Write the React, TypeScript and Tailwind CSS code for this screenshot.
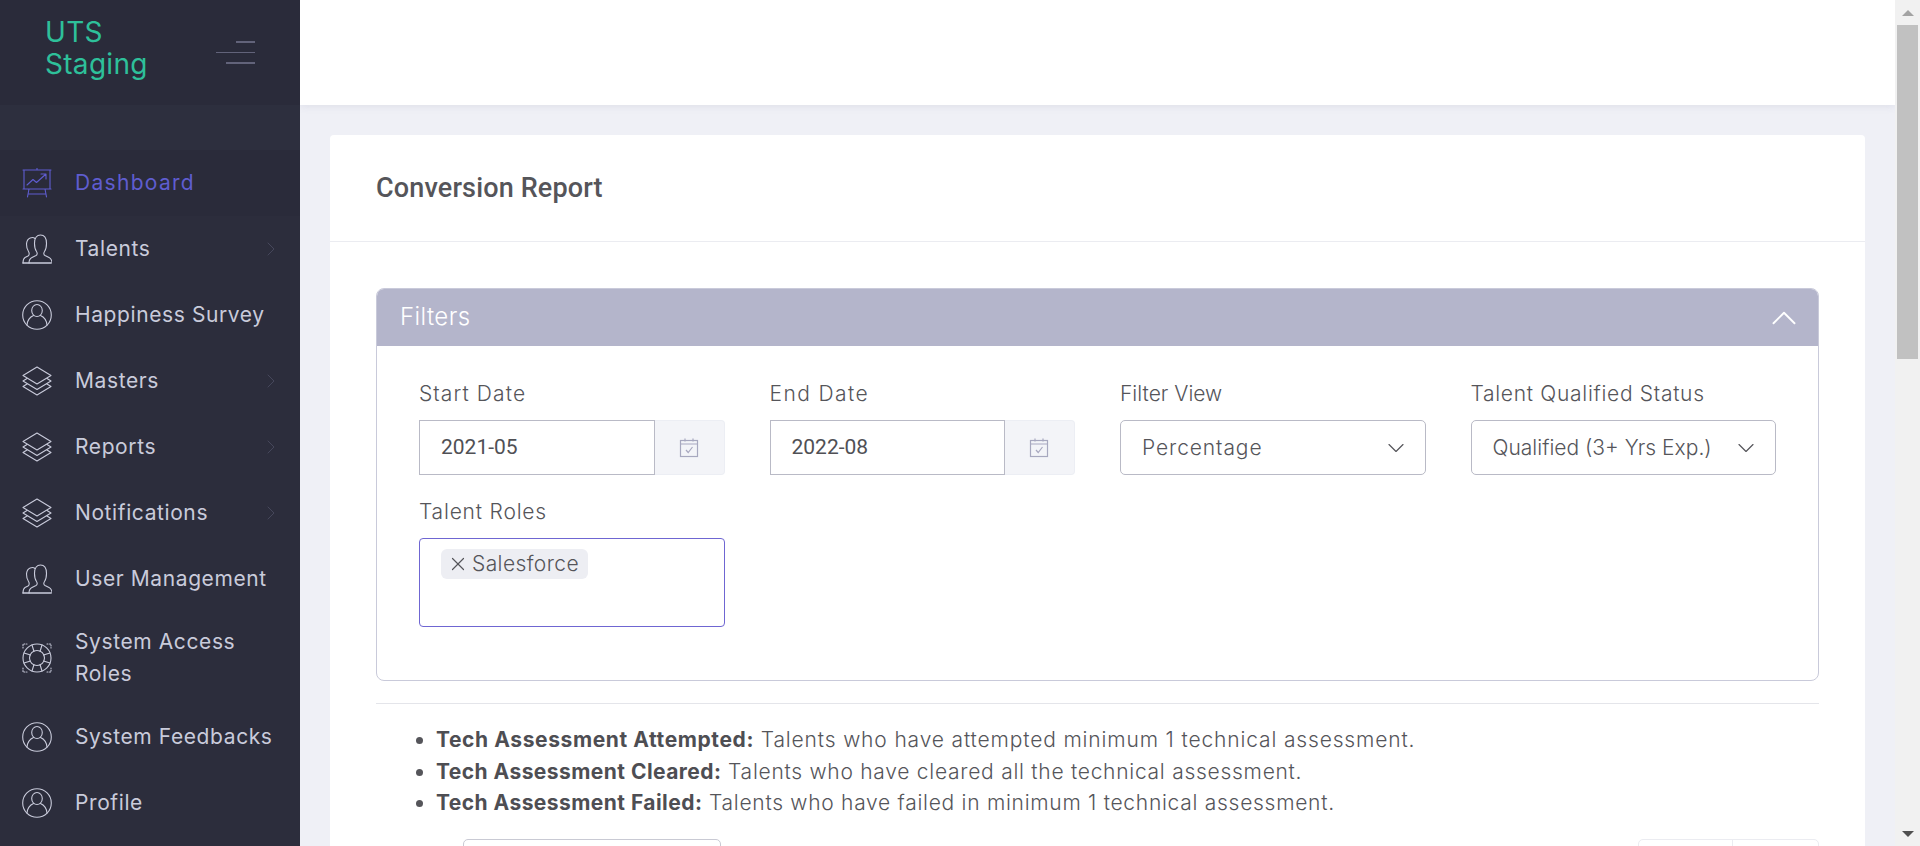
import { ChevronDown, ChevronRight, ChevronUp, X } from 'lucide-react';
import type { ReactNode } from 'react';

const Svg = ({ children }: { children: ReactNode }) => (
  <svg viewBox="0 0 30 30" fill="none" stroke="currentColor" strokeWidth="1.1" strokeLinejoin="round" strokeLinecap="round" className="h-[30px] w-[30px] shrink-0">
    {children}
  </svg>
);

const BoardIcon = () => (
  <Svg>
    <path d="M1 2h28M2 2v19h26V2M1 21h28M15 0v2M7 21l-1.500 8M23 21l1.500 8M6.500 26h17" />
    <path d="M5 17l6-5.500 3.500 3L24 6M19 6h5v5" />
  </Svg>
);

const UsersIcon = () => (
  <Svg>
    <path d="M7 29c0-3 1-4.500 3-5.500l4-2c1.500-.8 1.500-2.500.5-4-1.500-2-2-5-2-8C12.500 4 15 1 18.500 1s6 3 6 8.500c0 3-.5 6-2 8-1 1.500-1 3.200.5 4l4 2c2 1 3 2.500 3 5.500" />
    <path d="M13 4.500C11 2.800 5 3 4.500 10c0 3 .5 5.500 2 7.500 1 1.500 1 3.500-.5 4.500l-3 1.500C1.500 24.500 1 26.500 1 29" />
    <path d="M1 29h28" strokeWidth="1.500" />
  </Svg>
);

const UserIcon = () => (
  <Svg>
    <circle cx="15" cy="15" r="14.300" />
    <ellipse cx="15" cy="10.500" rx="5.300" ry="6" />
    <path d="M5 25c.5-5 3-8 6.500-9.500M25 25c-.5-5-3-8-6.500-9.500" />
  </Svg>
);

const LayersIcon = () => (
  <Svg>
    <path d="M15 1L29 9.500 15 18 1 9.500z" />
    <path d="M5 12.500L1 15l14 8.500L29 15l-4-2.500" />
    <path d="M5 18L1 20.500 15 29l14-8.500-4-2.500" />
  </Svg>
);

const RingIcon = () => (
  <Svg>
    <circle cx="15" cy="15" r="14" />
    <circle cx="15" cy="15" r="7.500" />
    <path d="M10 2l2 6.500M20 2l-2 6.500M10 28l2-6.500M20 28l-2-6.500M2 10l6.500 2M2 20l6.500-2M28 10l-6.500 2M28 20l-6.500-2" />
    <path d="M1 5V1h4M25 1h4v4M1 25v4h4M25 29h4v-4" strokeDasharray="1 1.500" />
  </Svg>
);

const CalendarIcon = () => (
  <svg viewBox="0 0 20 20" fill="none" stroke="#a7a8bf" strokeWidth="1.200" className="h-5 w-5">
    <rect x="1.500" y="2.500" width="17" height="16" />
    <path d="M1.500 6h17M6 0.500v3M14 0.500v3" />
    <path d="M7 12l2.200 2.500L13.500 9" />
  </svg>
);

const navItems = [
  { label: 'Talents', icon: <UsersIcon />, arrow: true },
  { label: 'Happiness Survey', icon: <UserIcon /> },
  { label: 'Masters', icon: <LayersIcon />, arrow: true },
  { label: 'Reports', icon: <LayersIcon />, arrow: true },
  { label: 'Notifications', icon: <LayersIcon />, arrow: true },
  { label: 'User Management', icon: <UsersIcon /> },
];

const NavRow = ({ label, icon, arrow, tall }: { label: ReactNode; icon: ReactNode; arrow?: boolean; tall?: boolean }) => (
  <div className={`flex items-center pl-[22px] pr-[17px] text-[#c9cbdb] ${tall ? 'h-[92px]' : 'h-[66px]'}`}>
    {icon}
    <span className="ml-[23px] flex-1 text-[21px] leading-[32px] tracking-[0.6px]">{label}</span>
    {arrow && <ChevronRight size={24} strokeWidth={0.8} className="text-[#4c4e63]" />}
  </div>
);

function Sidebar() {
  return (
    <aside className="h-[846px] w-[300px] shrink-0 overflow-hidden bg-[#2c2d3c] font-['Inter',sans-serif]">
      <div className="flex h-[105px] items-center justify-between bg-[#2a2b3a] pl-[45px] pr-[45px]">
        <div className="mb-[10px] w-[120px] text-[28px] leading-[32px] tracking-[0.3px] text-[#2ec09a]">UTS Staging</div>
        <div className="flex w-[40px] flex-col items-end gap-[9px]">
          <span className="h-[2px] w-[19px] bg-[#62637a]" />
          <span className="h-px w-[39px] bg-[#62637a]" />
          <span className="h-[2px] w-[29px] bg-[#62637a]" />
        </div>
      </div>
      <div className="h-[45px] bg-[#2d2f3e]" />
      <div className="flex h-[66px] items-center bg-[#2a2b3a] pl-[22px] text-[#5f5dd0]">
        <BoardIcon />
        <span className="ml-[23px] text-[21px] leading-[32px] tracking-[1.3px]">Dashboard</span>
      </div>
      {navItems.map((item) => (
        <NavRow key={item.label} {...item} />
      ))}
      <NavRow tall icon={<RingIcon />} label={<>System Access<br />Roles</>} />
      <NavRow icon={<UserIcon />} label="System Feedbacks" />
      <NavRow icon={<UserIcon />} label="Profile" />
    </aside>
  );
}

const FieldLabel = ({ children, className }: { children: ReactNode; className: string }) => (
  <div className={`text-[21px] font-light leading-[30px] text-[#55555a] ${className}`}>{children}</div>
);

const DateField = ({ label, value, inputWidth, tracking }: { label: string; value: string; inputWidth: string; tracking: string }) => (
  <div>
    <FieldLabel className={`mb-[11px] ${tracking}`}>{label}</FieldLabel>
    <div className="flex h-[55px]">
      <div className={`flex items-center border border-[#b9bac6] bg-white pl-[21px] font-['Roboto',sans-serif] text-[21px] text-[#505055] ${inputWidth}`}>
        {value}
      </div>
      <div className="flex flex-1 items-center justify-center rounded-r-[4px] border border-l-0 border-[#eceef4] bg-[#f3f4f8]">
        <CalendarIcon />
      </div>
    </div>
  </div>
);

const SelectField = ({ label, value, tracking, valueTracking }: { label: string; value: string; tracking: string; valueTracking: string }) => (
  <div>
    <FieldLabel className={`mb-[11px] ${tracking}`}>{label}</FieldLabel>
    <div className="flex h-[55px] items-center justify-between rounded-[5px] border border-[#b9bac6] bg-white pl-[21px] pr-[16px] text-[21px] font-light text-[#55555a]">
      <span className={`whitespace-nowrap ${valueTracking}`}>{value}</span>
      <ChevronDown size={28} strokeWidth={1} className="-mx-[1px] shrink-0 text-[#55555a]" />
    </div>
  </div>
);

function Filters() {
  return (
    <section className="h-[393px] rounded-[8px] border border-[#c9cada] bg-white">
      <div className="flex h-[57px] items-center justify-between rounded-t-[7px] bg-[#b4b5cb] pl-[23px] pr-[13px] text-white">
        <span className="pb-[2px] text-[24px] font-light tracking-[0.4px]">Filters</span>
        <ChevronUp size={42} strokeWidth={1.1} />
      </div>
      <div className="px-[42px] pt-[33px]">
        <div className="grid grid-cols-4 gap-x-[45px]">
          <DateField label="Start Date" value="2021-05" inputWidth="w-[236px]" tracking="tracking-[1.1px]" />
          <DateField label="End Date" value="2022-08" inputWidth="w-[235px]" tracking="tracking-[1.4px]" />
          <SelectField label="Filter View" value="Percentage" tracking="tracking-normal" valueTracking="tracking-[0.9px]" />
          <SelectField label="Talent Qualified Status" value="Qualified (3+ Yrs Exp.)" tracking="tracking-[0.7px]" valueTracking="tracking-normal" />
        </div>
        <div className="mt-[22px] w-[306px]">
          <FieldLabel className="mb-[11px] tracking-[0.8px]">Talent Roles</FieldLabel>
          <div className="h-[89px] rounded-[4px] border border-[#6f66d2] pl-[21px] pt-[10px]">
            <span className="inline-flex h-[30px] items-center gap-[3px] rounded-[6px] bg-[#edeef3] pl-[6px] pr-[9px] text-[21px] font-light tracking-[0.4px] text-[#55555a]">
              <X size={22} strokeWidth={1.3} />
              Salesforce
            </span>
          </div>
        </div>
      </div>
    </section>
  );
}

const notes = [
  { title: 'Tech Assessment Attempted:', text: 'Talents who have attempted minimum 1 technical assessment.', titleTrack: 'tracking-[0.6px]', textTrack: 'tracking-[0.85px]' },
  { title: 'Tech Assessment Cleared:', text: 'Talents who have cleared all the technical assessment.', titleTrack: 'tracking-[0.45px]', textTrack: 'tracking-[0.73px]' },
  { title: 'Tech Assessment Failed:', text: 'Talents who have failed in minimum 1 technical assessment.', titleTrack: 'tracking-[0.45px]', textTrack: 'tracking-[0.72px]' },
];

function Scrollbar() {
  return (
    <div className="flex h-[846px] w-[25px] shrink-0 flex-col items-center bg-[#f1f1f1]">
      <div className="flex h-[25px] items-center justify-center">
        <div className="h-0 w-0 border-x-[6px] border-b-[6px] border-x-transparent border-b-[#a3a3a3]" />
      </div>
      <div className="h-[334px] w-[21px] bg-[#c1c1c1]" />
      <div className="flex-1" />
      <div className="flex h-[25px] items-center justify-center">
        <div className="h-0 w-0 border-x-[6px] border-t-[6px] border-x-transparent border-t-[#505050]" />
      </div>
    </div>
  );
}

export default function App() {
  return (
    <div className="flex h-[846px] w-[1920px] overflow-hidden font-['Inter',sans-serif] text-[#55555a]">
      <Sidebar />
      <main className="h-[846px] w-[1595px] overflow-hidden bg-[#eff0f6]">
        <header className="h-[105px] bg-white shadow-[0_1px_8px_rgba(90,90,130,0.12)]" />
        <div className="ml-[30px] mt-[30px] w-[1535px] rounded-t-[4px] bg-white pb-[40px]">
          <div className="flex h-[107px] items-center border-b border-[#ebecf1] pl-[46px] font-['Roboto',sans-serif] text-[27px] font-medium tracking-[0.15px] text-[#55555a]">
            Conversion Report
          </div>
          <div className="px-[46px] pt-[46px]">
            <Filters />
            <hr className="mt-[22px] border-[#e4e5ea]" />
            <ul className="ml-[60px] mt-[20px] list-disc text-[21px] font-light leading-[31.5px]">
              {notes.map((note) => (
                <li key={note.title} className={note.textTrack}>
                  <b className={`font-bold text-[#4e4e53] ${note.titleTrack}`}>{note.title}</b> {note.text}
                </li>
              ))}
            </ul>
            <div className="mt-[20px] flex justify-between pl-[87px]">
              <div className="h-[50px] w-[258px] rounded-[5px] border border-[#c9cad4]" />
              <div className="flex h-[50px] w-[181px] rounded-[5px] border border-[#ebecf1]">
                <div className="w-[94px] border-r border-[#ebecf1]" />
              </div>
            </div>
          </div>
        </div>
      </main>
      <Scrollbar />
    </div>
  );
}
